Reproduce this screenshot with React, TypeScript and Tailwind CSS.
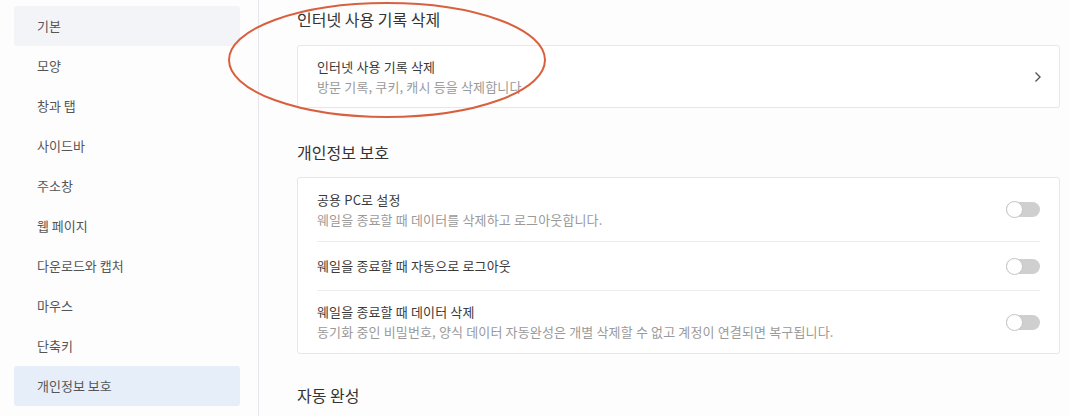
import React from 'react';

const menu = ['기본', '모양', '창과 탭', '사이드바', '주소창', '웹 페이지', '다운로드와 캡처', '마우스', '단축키', '개인정보 보호'];

function Toggle() {
    return (
        <div className="relative w-[34px] h-[15px] rounded-full bg-[#cfcfcf] shrink-0">
            <div className="absolute left-0 top-[-1px] w-[17px] h-[17px] rounded-full bg-white border border-[#c4c4c4]" />
        </div>
    );
}

function Row({ title, desc, h }: { title: string; desc?: string; h: string }) {
    return (
        <div className={`flex items-center justify-between px-[19px] ${h}`}>
            <div className="flex flex-col">
                <span className="text-[13px] tracking-[0.15px] leading-[20px] text-[#3a3a3a]">{title}</span>
                {desc && <span className="text-[13px] tracking-[0.15px] leading-[20px] text-[#9a9a9a]">{desc}</span>}
            </div>
            <Toggle />
        </div>
    );
}

export default function App() {
    return (
        <div
            className="relative flex w-[1069px] h-[416px] overflow-hidden bg-[#fdfdfe]"
            style={{ fontFamily: '"Noto Sans CJK KR", "Noto Sans", sans-serif' }}
        >
            {/* Sidebar */}
            <div className="w-[259px] shrink-0 border-r border-[#e3e6eb] pt-[6px] pl-[14px] pr-[18px]">
                {menu.map((m, i) => (
                    <div
                        key={m}
                        className={`h-[40px] flex items-center pl-[23px] rounded-[3px] text-[13px] text-[#555] ${
                            i === 0 ? 'bg-[#f3f4f8]' : i === menu.length - 1 ? 'bg-[#e6eef9] text-[#333]' : ''
                        }`}
                    >
                        {m}
                    </div>
                ))}
            </div>

            {/* Content */}
            <div className="flex-1 pl-[38px] pr-[9px]">
                <div className="h-[37px] flex items-center text-[16px] text-[#333]">인터넷 사용 기록 삭제</div>
                <div className="mt-[8px] h-[63px] bg-white border border-[#e4e7eb] rounded-[3px] flex items-center justify-between px-[19px]">
                    <div className="flex flex-col">
                        <span className="text-[13px] tracking-[0.15px] leading-[20px] text-[#3a3a3a]">인터넷 사용 기록 삭제</span>
                        <span className="text-[13px] tracking-[0.15px] leading-[20px] text-[#9a9a9a]">방문 기록, 쿠키, 캐시 등을 삭제합니다</span>
                    </div>
                    <svg width="8" height="12" viewBox="0 0 8 12" className="mr-[-2px]">
                        <polyline points="1.5,1.5 6,6 1.5,10.5" fill="none" stroke="#555" strokeWidth="1.4" />
                    </svg>
                </div>

                <div className="mt-[26px] h-[36px] flex items-center text-[16px] text-[#333]">개인정보 보호</div>
                <div className="mt-[7px] bg-white border border-[#e4e7eb] rounded-[3px]">
                    <Row h="h-[63px]" title="공용 PC로 설정" desc="웨일을 종료할 때 데이터를 삭제하고 로그아웃합니다." />
                    <div className="mx-[19px] h-px bg-[#ebedf0]" />
                    <Row h="h-[48px]" title="웨일을 종료할 때 자동으로 로그아웃" />
                    <div className="mx-[19px] h-px bg-[#ebedf0]" />
                    <Row
                        h="h-[62px]"
                        title="웨일을 종료할 때 데이터 삭제"
                        desc="동기화 중인 비밀번호, 양식 데이터 자동완성은 개별 삭제할 수 없고 계정이 연결되면 복구됩니다."
                    />
                </div>

                <div className="mt-[23px] h-[36px] flex items-center text-[16px] text-[#333]">자동 완성</div>
            </div>

            {/* Annotation ellipse */}
            <svg className="absolute left-0 top-0 pointer-events-none" width="1069" height="416">
                <ellipse cx="387" cy="60" rx="158" ry="57" fill="none" stroke="#d9603e" strokeWidth="2" />
            </svg>
        </div>
    );
}
